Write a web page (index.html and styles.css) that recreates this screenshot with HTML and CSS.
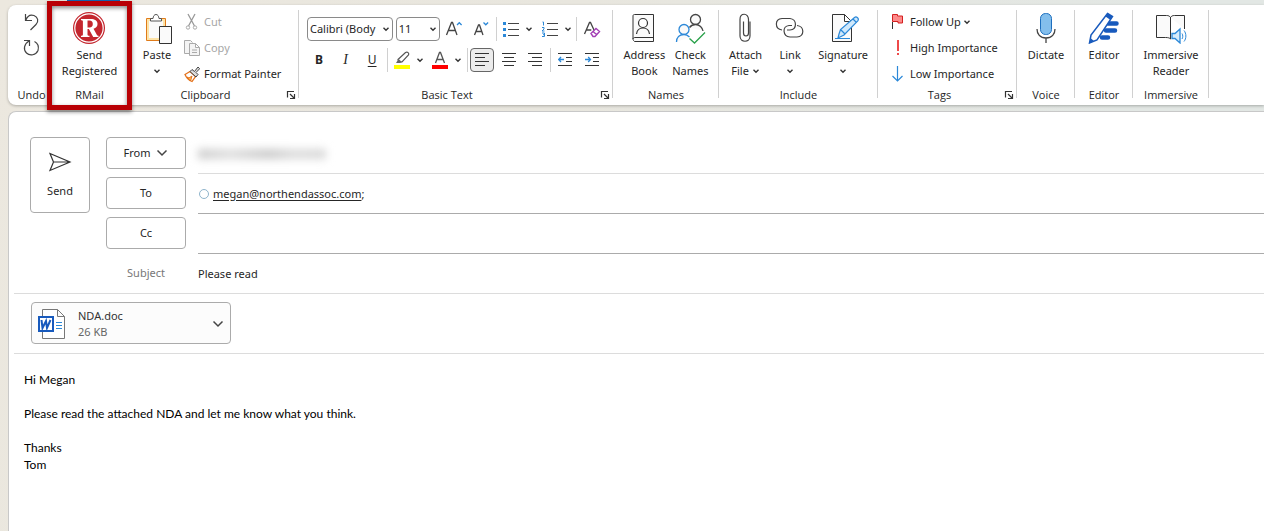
FILE: index.html
```html
<!DOCTYPE html>
<html lang="en">
<head>
<meta charset="utf-8">
<title>Please read - Message</title>
<link rel="stylesheet" href="styles.css">
</head>
<body>
<svg class="defs" aria-hidden="true">
  <symbol id="chev" viewBox="0 0 8 8"><path d="M1.5 2.8 4 5.3 6.5 2.8" fill="none" stroke="#333" stroke-width="1.4"/></symbol>
  <symbol id="launch" viewBox="0 0 10 10"><path d="M1.5 7.500V1.500H8M4 4l4 4M8.500 4v4.500H4" fill="none" stroke="#333" stroke-width="1.2"/></symbol>
</svg>

<header class="ribbon">
  <section class="group undo">
    <div class="tools stack">
      <button class="plain" aria-label="Undo"><svg width="18" height="20" viewBox="0 0 18 20"><path d="M2.500 2v6.500H9M2.800 8.200C4.500 3.500 8 2.500 11 3.500c4 1.500 5 6 2 9L7.500 18" fill="none" stroke="#444" stroke-width="1.2"/></svg></button>
      <button class="plain" aria-label="Redo"><svg width="18" height="20" viewBox="0 0 18 20"><path d="M1 2.500h5.500V8M6 3C1 6 0 11.500 3.500 15s9.500 2 11.500-2.500c1-4-.5-7.500-3.500-9" fill="none" stroke="#444" stroke-width="1.2"/></svg></button>
    </div>
    <h2>Undo</h2>
  </section>

  <section class="group rmail">
    <div class="tab"></div>
    <div class="tools">
      <button class="big"><svg width="32" height="32" viewBox="0 0 32 32"><circle cx="16" cy="16" r="16" fill="#c4262e"/><circle cx="16" cy="16" r="14.200" fill="none" stroke="#fff" stroke-width="1.200"/><path fill-rule="evenodd" fill="#fff" d="M8 7h9.500c4.500 0 7 1.700 7 5 0 2.500-1.500 4-4 4.700l3.300 6c.4.700.8 1 1.700 1v1.300h-5.300l-4.300-8h-1.400v5.500c0 .900.500 1.200 2 1.200V25H8v-1.300c1.400 0 1.900-.3 1.900-1.200v-13c0-.9-.5-1.200-1.900-1.200ZM14.500 8.500v7h2c2.300 0 3.300-1.200 3.300-3.500s-1-3.500-3.300-3.500Z"/></svg><span>Send<br>Registered</span></button>
    </div>
    <h2>RMail</h2>
    <div class="marker"></div>
  </section>

  <section class="group clipboard">
    <div class="tools">
      <button class="big"><svg width="32" height="32" viewBox="0 0 32 32"><path d="M5.500 6.500h19v22h-19z" fill="#fde3a7" stroke="#e07b1a"/><path d="M8 9h14v17H8z" fill="#fafafa"/><path d="M9.500 9V6.500H12c.3-2.500 1.300-4 3-4s2.700 1.500 3 4h2.500V9z" fill="#fff" stroke="#555"/><path d="M18.500 14.500h12v17h-12z" fill="#fafafa" stroke="#333"/></svg><span>Paste</span><svg class="chev"><use href="#chev"/></svg></button>
      <div class="lines">
        <button class="line off"><svg width="16" height="18" viewBox="0 0 16 18"><path d="M4 1l6.500 12M11 1L4.500 13" fill="none" stroke="#999" stroke-width="1.300"/><circle cx="4" cy="14.500" r="1.700" fill="none" stroke="#aaa"/><circle cx="11" cy="14.500" r="1.700" fill="none" stroke="#aaa"/></svg>Cut</button>
        <button class="line off"><svg width="16" height="18" viewBox="0 0 16 18"><path d="M5.500 14.500h-5v-13h6l2 2M5.500 4.500h6l4 4v8h-10zM11.500 4.500v4h4M8 11h5M8 13.500h5" fill="#f4f4f4" stroke="#aaa"/></svg>Copy</button>
        <button class="line"><svg width="16" height="18" viewBox="0 0 16 18"><path d="M1 9.500l5-3 5.500 5-3.500 5C5 15.500 2.500 13 1 9.500Z" fill="#fff" stroke="#e4721c" stroke-width="1.300"/><path d="M3 12l2 1 3-2-1.500 5Z" fill="#ffc45a" stroke="#e4721c"/><path d="M6 6.500l2-2 2.500 2L14 2l1.700 1.700L12 7.500l2 2-2 2.500Z" fill="#ddd" stroke="#444"/></svg>Format Painter</button>
      </div>
    </div>
    <h2>Clipboard</h2>
    <button class="launch" aria-label="Clipboard settings"><svg width="10" height="10"><use href="#launch"/></svg></button>
  </section>

  <section class="group text">
    <div class="tools rows">
      <div class="row">
        <div class="pick"><select class="font" aria-label="Font"><option>Calibri (Body</option></select><svg class="chev"><use href="#chev"/></svg></div>
        <div class="pick"><select class="size" aria-label="Font size"><option>11</option></select><svg class="chev"><use href="#chev"/></svg></div>
        <button class="sq" aria-label="Grow font"><svg width="18" height="20" viewBox="0 0 18 20"><path d="M1.500 16 6.500 3.500h1L12 16M3.300 11.500h7" fill="none" stroke="#444" stroke-width="1.300"/><path d="M12 6l2.300-2.300L16.600 6" fill="none" stroke="#2b88d8" stroke-width="1.300"/></svg></button>
        <button class="sq" aria-label="Shrink font"><svg width="18" height="20" viewBox="0 0 18 20"><path d="M2.500 16 6.500 6h1L11 16M4 12.500h5.800" fill="none" stroke="#444" stroke-width="1.300"/><path d="M11.500 3.500l2.300 2.300 2.300-2.300" fill="none" stroke="#2b88d8" stroke-width="1.300"/></svg></button>
        <i class="sep"></i>
        <button class="sq" aria-label="Bullets"><svg width="16" height="16" viewBox="0 0 16 16"><path d="M0 1h3v3H0zM0 7h3v3H0zM0 13h3v3H0z" fill="#2b88d8"/><path d="M5 2.500h11M5 8.500h11M5 14.500h11" stroke="#444"/></svg></button>
        <button class="tiny" aria-label="Bullet styles"><svg class="chev"><use href="#chev"/></svg></button>
        <button class="sq" aria-label="Numbering"><svg width="16" height="16" viewBox="0 0 16 16"><path d="M.5 1h1v3.500M0 6.500h2v1.500l-2 2h2.500M0 12h2.500v3.500H0M1 13.700h1" fill="none" stroke="#2b88d8"/><path d="M5 2.500h11M5 8.500h11M5 14.500h11" stroke="#444"/></svg></button>
        <button class="tiny" aria-label="Number styles"><svg class="chev"><use href="#chev"/></svg></button>
        <i class="sep"></i>
        <button class="sq" aria-label="Clear formatting"><svg width="18" height="20" viewBox="0 0 18 20"><path d="M1.500 15 6.500 3.500h1L11 11M3.300 11h5" fill="none" stroke="#444" stroke-width="1.300"/><path d="M8 14.500l5-5 3.500 3L12 17.500H10zM10 12.500l3.500 3" fill="#fff" stroke="#a33fb5" stroke-width="1.400"/></svg></button>
      </div>
      <div class="row">
        <button class="sq bold">B</button>
        <button class="sq ital">I</button>
        <button class="sq under">U</button>
        <i class="sep"></i>
        <button class="sq" aria-label="Highlight"><svg width="16" height="18" viewBox="0 0 16 18"><path d="M4 8.500 11.500 1.500c2-1 4 .5 3 2.500L8 11H5z" fill="#fff" stroke="#555" stroke-width="1.200"/><path d="M2 12l2.500-4L8 11l-2 1z" fill="#666"/><path d="M0 14h16v4H0z" fill="#ff0"/></svg></button>
        <button class="tiny" aria-label="Highlight colors"><svg class="chev"><use href="#chev"/></svg></button>
        <button class="sq" aria-label="Font color"><svg width="16" height="18" viewBox="0 0 16 18"><path d="M3.500 12 7.500 1.500h1l4 10.500M5 8.500h6" fill="none" stroke="#555" stroke-width="1.300"/><path d="M0 14h16v4H0z" fill="#f00"/></svg></button>
        <button class="tiny" aria-label="Font colors"><svg class="chev"><use href="#chev"/></svg></button>
        <i class="sep"></i>
        <button class="sq on" aria-label="Align left"><svg width="14" height="14" viewBox="0 0 14 14"><path d="M0 .5h14M0 4.500h10M0 8.500h14M0 12.500h10" stroke="#333"/></svg></button>
        <button class="sq" aria-label="Center"><svg width="14" height="14" viewBox="0 0 14 14"><path d="M0 .5h14M2 4.500h10M0 8.500h14M2 12.500h10" stroke="#333"/></svg></button>
        <button class="sq" aria-label="Align right"><svg width="14" height="14" viewBox="0 0 14 14"><path d="M0 .5h14M4 4.500h10M0 8.500h14M4 12.500h10" stroke="#333"/></svg></button>
        <i class="sep"></i>
        <button class="sq" aria-label="Decrease indent"><svg width="14" height="14" viewBox="0 0 14 14"><path d="M0 .5h14M8 4.500h6M8 8.500h6M0 12.500h14" stroke="#333"/><path d="M6 6.500H.7M3 4 .7 6.500 3 9" fill="none" stroke="#2b88d8" stroke-width="1.300"/></svg></button>
        <button class="sq" aria-label="Increase indent"><svg width="14" height="14" viewBox="0 0 14 14"><path d="M0 .5h14M8 4.500h6M8 8.500h6M0 12.500h14" stroke="#333"/><path d="M0 6.500h5.500M3.200 4l2.300 2.500L3.200 9" fill="none" stroke="#2b88d8" stroke-width="1.300"/></svg></button>
      </div>
    </div>
    <h2>Basic Text</h2>
    <button class="launch" aria-label="Text settings"><svg width="10" height="10"><use href="#launch"/></svg></button>
  </section>

  <section class="group names">
    <div class="tools">
      <button class="big"><svg width="32" height="32" viewBox="0 0 32 32"><path d="M6.500 2.500h19v27h-19c-1-1-1.500-1.500-1.500-2.500V4c0-1 .5-1.500 1.500-1.500Z" fill="#fafafa" stroke="#333"/><path d="M5 27c0-1 1-1.500 2-1.500h18.500" fill="none" stroke="#333"/><circle cx="15" cy="11" r="4.500" fill="#fff" stroke="#333" stroke-width="1.200"/><path d="M8.500 22c.5-4 3-6 6.500-6s6 2 6.500 6" fill="none" stroke="#333" stroke-width="1.200"/></svg><span>Address<br>Book</span></button>
      <button class="big"><svg width="32" height="32" viewBox="0 0 32 32"><g fill="#fafafa" stroke-width="1.300"><circle cx="21.500" cy="7.500" r="5" stroke="#444"/><path d="M15.500 15.500c1.500-2 3.500-3 6-3 4 0 7 3 7.500 6.500" stroke="#444"/><circle cx="10" cy="17.500" r="5" stroke="#2b88d8"/><path d="M2.500 30c0-4.500 3-7.500 7.500-7.500 2 0 4 1 5.500 2.500" stroke="#2b88d8"/></g><path d="M15.500 26.500l5 4.500L31 20.500" fill="none" stroke="#2ba24c" stroke-width="1.300"/></svg><span>Check<br>Names</span></button>
    </div>
    <h2>Names</h2>
  </section>

  <section class="group include">
    <div class="tools">
      <button class="big"><svg width="32" height="32" viewBox="0 0 32 32"><path d="M13.500 9.500V21c0 4 5 4 5 0V7.500c0-7-8.500-7-8.500 0V24c0 7 10 7 10 0V9.500" fill="none" stroke="#444" stroke-width="1.200"/></svg><span>Attach<br>File <svg class="chev"><use href="#chev"/></svg></span></button>
      <button class="big"><svg width="32" height="32" viewBox="0 0 32 32"><path d="M8 18c-7.500-1-7.500-11 0-11.500h8c7 .5 7.500 11 0 11.500h-3" fill="none" stroke="#444" stroke-width="1.200"/><path d="M23 13.500c7.500.5 8 11 0 11.500h-7c-7.500-.5-8-11-1-11.500h3" fill="none" stroke="#444" stroke-width="1.200"/></svg><span>Link</span><svg class="chev"><use href="#chev"/></svg></button>
      <button class="big"><svg width="32" height="32" viewBox="0 0 32 32"><path d="M5.500 2.500h12l7 7v20h-19zM17.500 2.500v7h7" fill="#fafafa" stroke="#333"/><path d="M8 26.500h15M12 22l1.500-4.500L27.500 5.500c2-1.500 5 1 3.300 3.300L17 23l-6 3zM13.500 17.500l4 4M26 7l3.500 3.500" fill="#cfe8fb" stroke="#2b88d8" stroke-width="1.200"/></svg><span>Signature</span><svg class="chev"><use href="#chev"/></svg></button>
    </div>
    <h2>Include</h2>
  </section>

  <section class="group tags">
    <div class="tools">
      <div class="lines">
        <button class="line"><svg width="12" height="18" viewBox="0 0 12 18"><path d="M.5 9v7" stroke="#333"/><path d="M.5 1.500h5V3h5v7H6V8.500H.5z" fill="#fc8a8a" stroke="#d42020"/></svg>Follow Up<svg class="chev"><use href="#chev"/></svg></button>
        <button class="line"><svg width="12" height="18" viewBox="0 0 12 18"><path d="M6 1v11M6 14v2" stroke="#ee4a4a" stroke-width="2"/></svg>High Importance</button>
        <button class="line"><svg width="12" height="18" viewBox="0 0 12 18"><path d="M5.500 1v15M.5 11l5 5 5-5" fill="none" stroke="#2b88d8" stroke-width="1.200"/></svg>Low Importance</button>
      </div>
    </div>
    <h2>Tags</h2>
    <button class="launch" aria-label="Tag settings"><svg width="10" height="10"><use href="#launch"/></svg></button>
  </section>

  <section class="group voice">
    <div class="tools"><button class="big"><svg width="32" height="32" viewBox="0 0 32 32"><rect x="10.500" y="1.500" width="11" height="21" rx="5" fill="#83beec" stroke="#1e6fbf"/><path d="M7 17c0 5 3 9 9 9s9-4 9-9M16 26v5" fill="none" stroke="#444" stroke-width="1.300"/></svg><span>Dictate</span></button></div>
    <h2>Voice</h2>
  </section>
  <section class="group editor">
    <div class="tools"><button class="big"><svg width="32" height="32" viewBox="0 0 32 32"><path d="M20 11.500h8.500M18 18.500h9M14 25.500h6" stroke="#185abd" stroke-width="4.500" stroke-linecap="round"/><path d="M19.500 1.500l5 3L9 28l-7.500 3 1.500-8z" fill="#fff" stroke="#185abd" stroke-width="1.500"/><path d="M19.500 1.500l5 3-2 3.500-5-3.500zM1.500 31l1-5 3.500 3z" fill="#185abd"/></svg><span>Editor</span></button></div>
    <h2>Editor</h2>
  </section>
  <section class="group immersive">
    <div class="tools"><button class="big"><svg width="32" height="32" viewBox="0 0 32 32"><path d="M15.500 5.500c-1-1.500-2-2-4-2H1.500v22h9c3 0 4 .5 5 1.500zM15.500 5.500c1-1.500 2-2 4-2h10V17M15.500 5v20" fill="#fafafa" stroke="#333"/><path d="M17 21.500h3l5-4.500v14l-5-4.500h-3z" fill="#d5ebfb" stroke="#2b88d8" stroke-width="1.300"/><path d="M27 21.500c1 1.500 1 4 0 5.500M29 18.500c2.500 3 2.500 8 0 11" fill="none" stroke="#2b88d8"/></svg><span>Immersive<br>Reader</span></button></div>
    <h2>Immersive</h2>
  </section>
</header>

<main class="compose">
  <div class="head">
    <button class="box send"><svg width="24" height="20" viewBox="0 0 24 20"><path d="M2 1.500 22 10 2 18.500 5.500 10zM5.500 10H22" fill="none" stroke="#333" stroke-width="1.200"/></svg>Send</button>
    <div class="fields">
      <div class="field"><button class="box">From <svg width="12" height="12" viewBox="0 0 12 12"><path d="M1.500 3.500 6 8l4.500-4.500" fill="none" stroke="#444" stroke-width="1.500"/></svg></button><div class="value pale"><span class="smudge"></span></div></div>
      <div class="field"><button class="box">To</button><div class="value"><i class="presence"></i><a href="#">megan@northendassoc.com</a>;</div></div>
      <div class="field"><button class="box">Cc</button><div class="value"><input type="text" aria-label="Cc"></div></div>
      <div class="field subject"><label for="subject">Subject</label><input id="subject" type="text" value="Please read"></div>
    </div>
  </div>
  <div class="attachments">
    <button class="box file"><svg width="28" height="32" viewBox="0 0 28 32"><path d="M5.500 1.500h15l7 7v22h-22zM20.500 1.500v7h7" fill="#fff" stroke="#777"/><path d="M19 14.500h6M19 17.500h6M19 20.500h6" stroke="#2b88d8"/><path d="M1 8h16v16H1z" fill="#185abd"/><path d="M3 10h12v12H3z" fill="#fff"/><path d="M4.500 12l1 8L9 13l1 7 3.500-8" fill="none" stroke="#185abd" stroke-width="2"/></svg><span><b>NDA.doc</b>26 KB</span><svg width="12" height="12" viewBox="0 0 12 12"><path d="M1.500 3.500 6 8l4.500-4.500" fill="none" stroke="#444" stroke-width="1.500"/></svg></button>
  </div>
  <textarea class="message" aria-label="Message">Hi Megan

Please read the attached NDA and let me know what you think.

Thanks
Tom</textarea>
</main>
</body>
</html>
```
FILE: styles.css
```css
* { box-sizing: border-box; }
body {
  margin: 0;
  min-height: 100vh;
  padding: 5px 0 0 8px;
  display: flex;
  flex-direction: column;
  gap: 6px;
  background: linear-gradient(110deg, #ece8df 0%, #e8e6de 40%, #e2e7e4 80%);
  color: #262626;
  font: 11px/16px "Noto Sans", "Open Sans", sans-serif;
  overflow: hidden;
}
button, input, select, textarea { font: inherit; color: inherit; }
button { border: 0; padding: 0; background: none; }
.defs { position: absolute; width: 0; height: 0; }
.chev { width: 8px; height: 8px; }

.ribbon {
  display: flex;
  min-height: 100px;
  background: #fff;
  border-radius: 8px 0 0 8px;
  box-shadow: 0 1px 3px #0004;
}
.group {
  position: relative;
  flex: none;
  display: flex;
  flex-direction: column;
  justify-content: space-between;
  padding: 7px 0 2px;
}
.group + .group::after {
  content: "";
  position: absolute;
  top: 5px;
  right: 0;
  bottom: 7px;
  width: 1px;
  background: #d0d0d0;
}
.group h2 { margin: 0; font: 400 11px/16px "Open Sans", sans-serif; text-align: center; }
.tools { display: flex; justify-content: center; }
.stack { flex-direction: column; align-items: center; gap: 6px; }
.plain { display: flex; }
.big { display: flex; flex-direction: column; align-items: center; }
.big > span { margin-top: 3px; white-space: nowrap; }
.big > .chev { margin-top: 4px; }
.lines { display: flex; flex-direction: column; }
.line { display: flex; align-items: center; gap: 4px; height: 26px; white-space: nowrap; }
.off { color: #a6a6a6; }
.launch { position: absolute; right: 3px; bottom: 5px; display: flex; }

.undo { width: 39px; }
.undo h2 { padding-left: 8px; }
.undo .tools { padding-left: 8px; }
.rmail { width: 85px; }
.group.rmail::after { display: none; }
.tab { position: absolute; left: 20px; right: 12px; top: -5px; height: 2px; background: #1667b7; }
.marker { position: absolute; inset: -4px 0 -5px; border: 5px solid #b90005; box-shadow: 0 2px 4px #0007, inset 0 2px 4px #0007; pointer-events: none; }
.clipboard { width: 167px; }
.clipboard .tools { justify-content: flex-start; gap: 11px; padding-left: 9px; }
.clipboard h2 { padding-right: 20px; }
.clipboard .lines, .tags .lines { margin-top: -3px; }
.text { width: 314px; }
.text h2 { padding-right: 18px; }
.names { width: 106px; }
.names .tools { gap: 7px; }
.include { width: 159px; }
.include .tools { gap: 12px; }
.tags { width: 139px; }
.tags .tools { justify-content: flex-start; padding-left: 14px; }
.tags h2 { padding-right: 16px; }
.tags .line { gap: 6px; }
.tags .line .chev { margin-left: -4px; }
.voice, .editor { width: 58px; }
.immersive { width: 76px; }

.rows { flex-direction: column; gap: 7px; padding: 5px 9px 0 8px; }
.row { display: flex; justify-content: space-between; align-items: center; }
.pick { position: relative; display: flex; }
.pick select { height: 24px; padding: 0 2px; border: 1px solid #8a8a8a; border-radius: 4px; background: #fff; appearance: none; }
.pick .chev { position: absolute; right: 3px; top: 8px; pointer-events: none; }
.font { width: 86px; }
.size { width: 44px; }
.sq { display: flex; align-items: center; justify-content: center; width: 24px; height: 24px; }
.on { border: 1px solid #666; border-radius: 4px; background: #ececec; }
.tiny { display: flex; align-items: center; justify-content: center; width: 12px; height: 24px; margin-left: -3px; }
.sep { width: 1px; height: 24px; background: #d0d0d0; }
.bold { font-size: 12px; font-weight: 700; }
.ital { font-family: "Liberation Serif", serif; font-style: italic; font-size: 14px; }
.under { font-size: 12px; text-decoration: underline; text-underline-offset: 2px; }

.compose {
  flex: 1;
  display: flex;
  flex-direction: column;
  padding: 22px 0 0 5px;
  background: #fff;
  border: 1px solid #c8c8c8;
  border-width: 1px 0 0 1px;
  border-radius: 8px 0 0 0;
}
.head { display: flex; gap: 16px; padding-left: 16px; }
.box { border: 1px solid #ababab; border-radius: 4px; background: #fff; }
.send { display: flex; flex-direction: column; align-items: center; justify-content: center; gap: 11px; width: 60px; height: 76px; margin-top: 3px; }
.fields { flex: 1; }
.field { display: flex; gap: 12px; height: 40px; }
.field .box { display: flex; align-items: center; justify-content: center; gap: 6px; width: 80px; height: 32px; margin-top: 3px; }
.value { flex: 1; display: flex; align-items: center; border-bottom: 1px solid #ababab; }
.value.pale { border-color: #dcdcdc; }
.value a { color: inherit; text-underline-offset: 2px; }
.value input, .subject input { flex: 1; border: 0; padding: 0; outline: 0; background: none; }
.presence { width: 10px; height: 10px; margin: 0 4px 0 1px; border: 1px solid #8fb4cc; border-radius: 50%; }
.smudge { width: 128px; height: 10px; background: linear-gradient(90deg, #ccc, #dedede 25%, #d4d4d4 40%, #cacaca 55%, #dcdcdc 75%, #d8d8d8); filter: blur(4px); }
.subject label { width: 80px; line-height: 38px; text-align: center; color: #777; }
.subject input { height: 38px; }
.attachments { padding: 8px 0 9px 17px; border: 1px solid #dcdcdc; border-width: 1px 0; margin-top: -1px; }
.file { display: flex; align-items: center; gap: 13px; width: 200px; height: 42px; padding: 2px 6px 0 5px; background: #fcfcfc; text-align: left; }
.file span { flex: 1; color: #666; }
.file b { display: block; font-weight: 400; color: #333; }
.message { flex: 1; padding: 17px 10px; border: 0; outline: 0; resize: none; background: none; color: #000; font: 12px/17px Lato, "Open Sans", sans-serif; }
```
